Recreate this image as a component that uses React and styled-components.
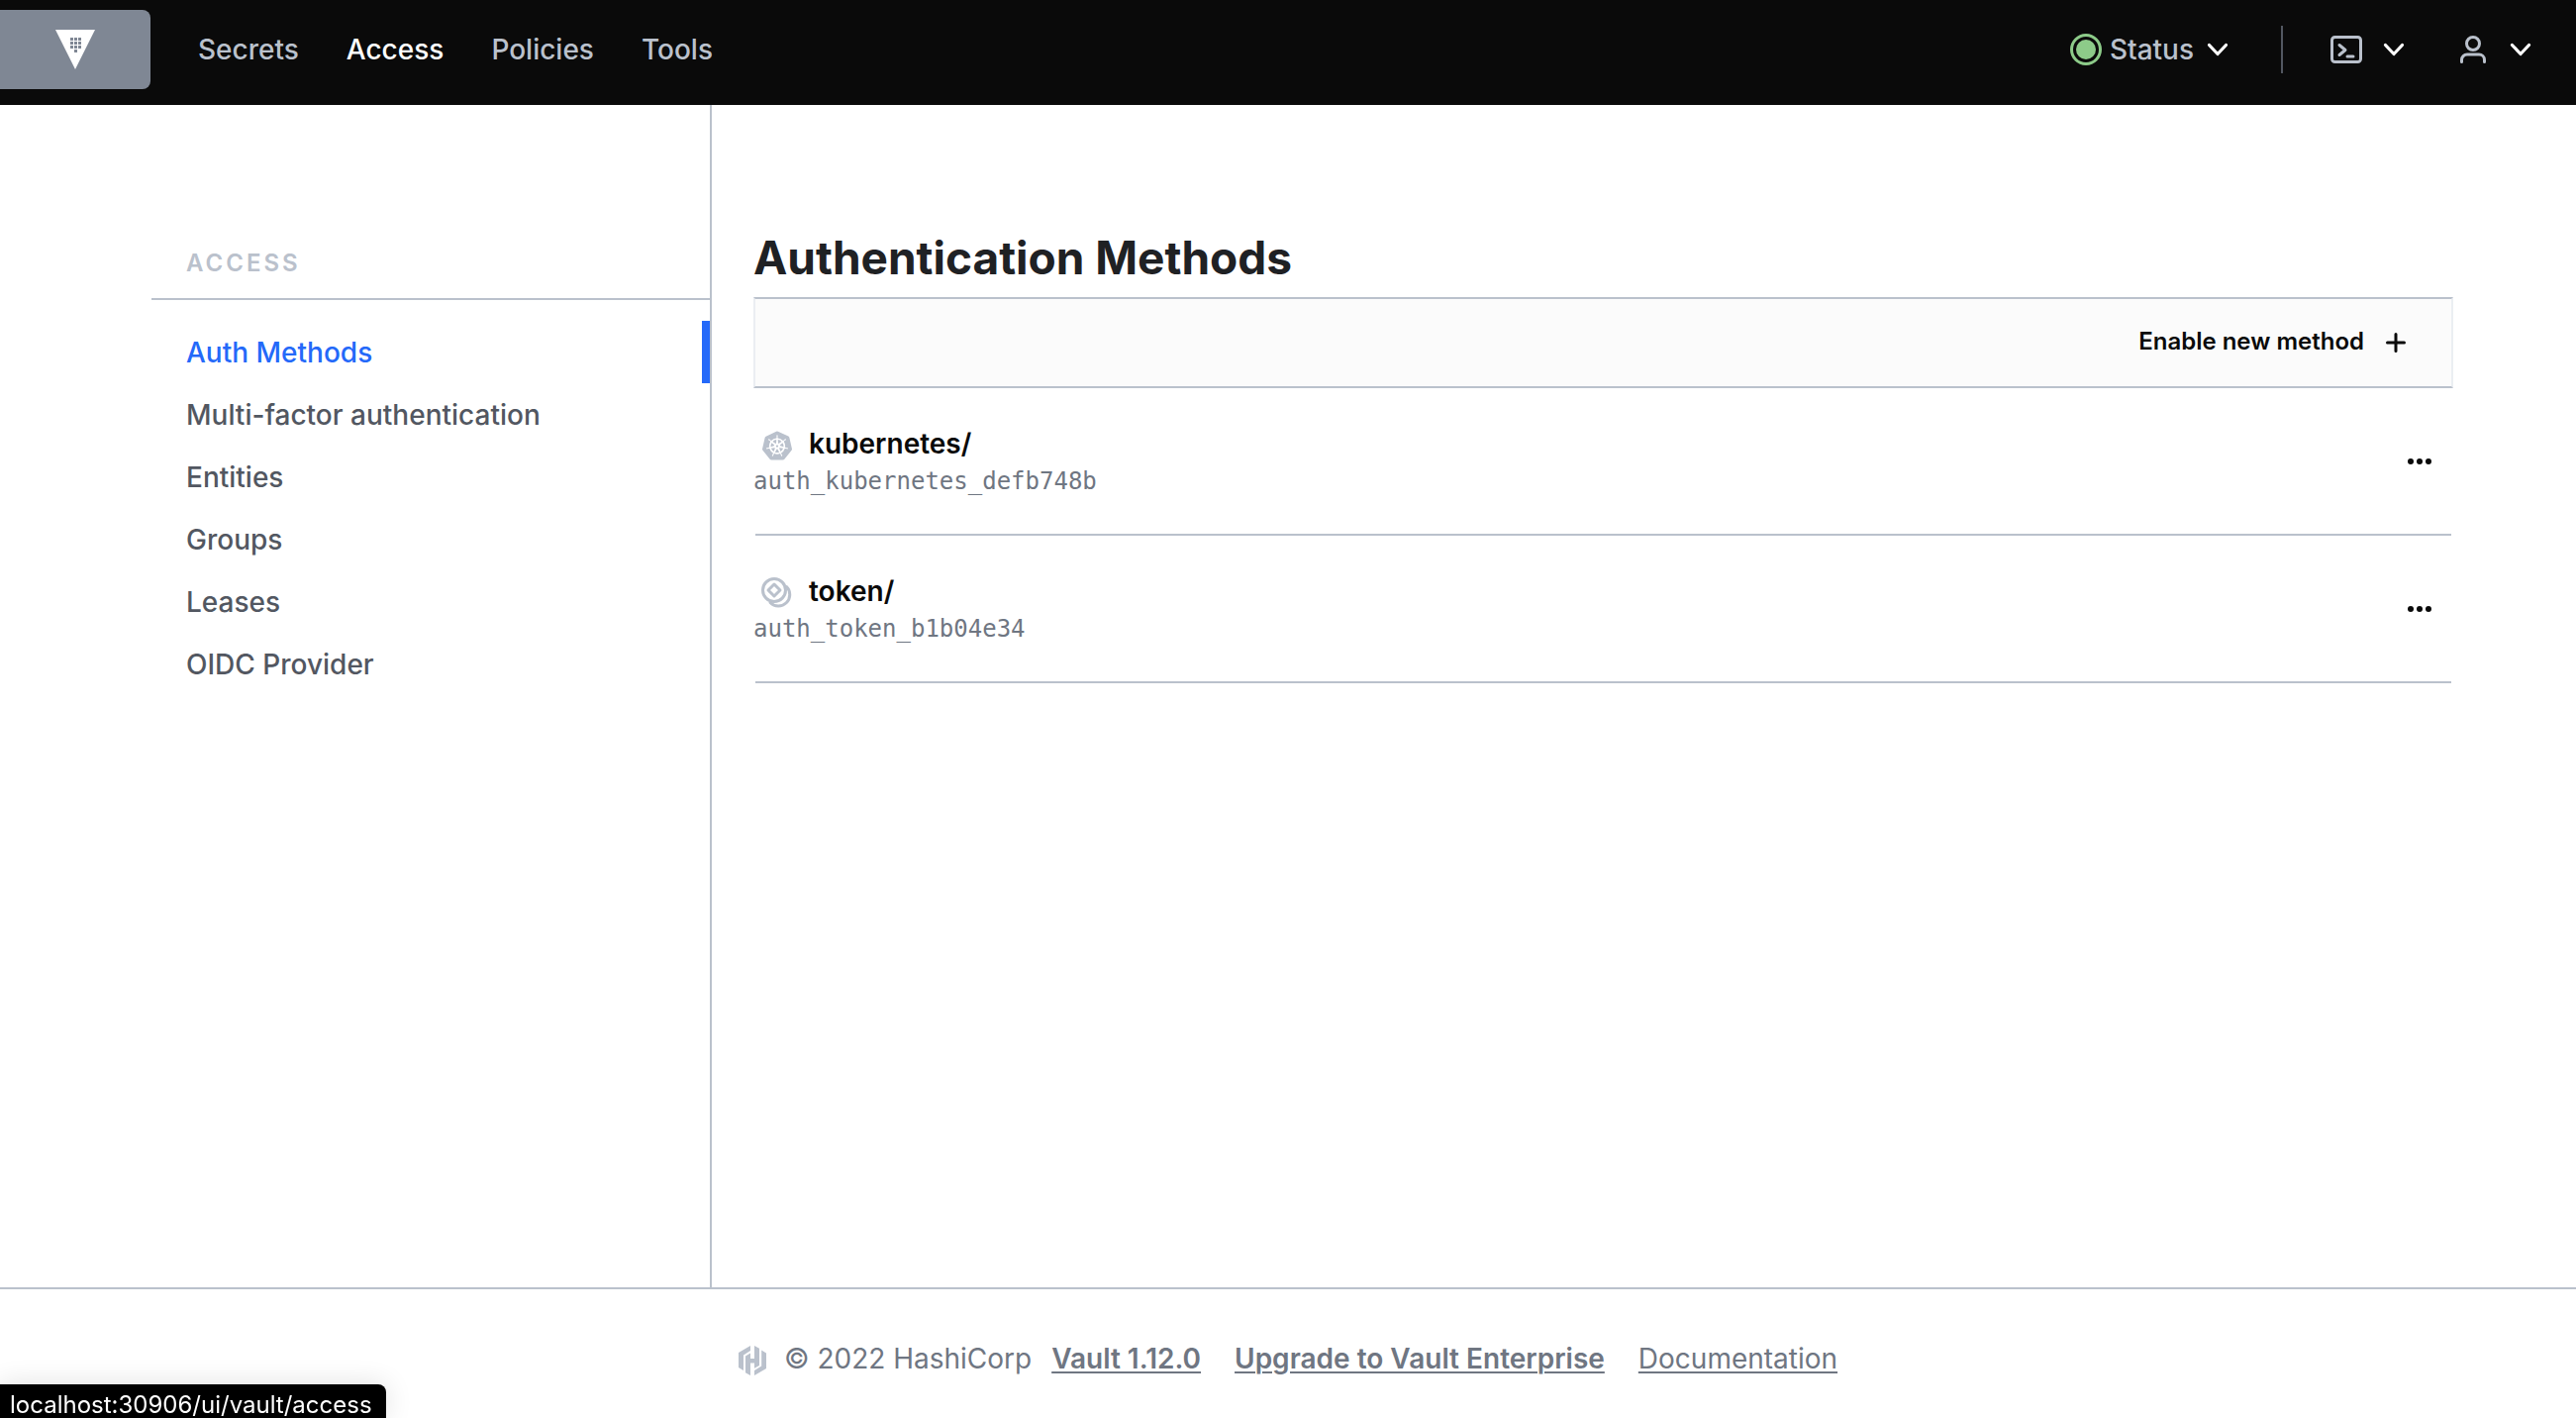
import React from 'react';
import styled, { createGlobalStyle } from 'styled-components';
import { SiKubernetes } from 'react-icons/si';

const color = {
  black: '#0a0a0a',
  ink: '#1f2124',
  body: '#525761',
  muted: '#6f7682',
  line: '#bac1cc',
  faint: '#ebeef2',
  brand: '#7f8794',
  blue: '#2469f9',
  green: '#8dcb89',
};

const GlobalStyle = createGlobalStyle`
  *, *::before, *::after { box-sizing: border-box; }
  body {
    margin: 0;
    background: #fff;
    color: ${color.black};
    font-family: Inter, "Liberation Sans", sans-serif;
    font-size: 28px;
    line-height: 36px;
    -webkit-font-smoothing: antialiased;
  }
  button { font: inherit; color: inherit; background: none; border: 0; padding: 0; cursor: pointer; }
  a { color: inherit; text-decoration: none; }
  ul { list-style: none; margin: 0; padding: 0; }
  svg { display: block; flex: none; }
`;

const Page = styled.div`
  display: flex;
  flex-direction: column;
  min-height: 100vh;
`;

const TopBar = styled.header`
  display: flex;
  align-items: center;
  height: 106px;
  padding: 0 40px 6px 0;
  background: ${color.black};
  color: ${color.line};
  font-weight: 500;
`;

const Brand = styled.a`
  display: flex;
  align-items: center;
  justify-content: center;
  width: 152px;
  height: 80px;
  border-radius: 0 8px 8px 0;
  background: ${color.brand};
`;

const MainNav = styled.nav`
  display: flex;
  gap: 48px;
  margin-left: 48px;
`;

const NavLink = styled.a`
  color: ${(p) => (p.$active ? '#fff' : color.line)};
`;

const Tools = styled.div`
  display: flex;
  align-items: center;
  margin-left: auto;
`;

const MenuButton = styled.button`
  display: flex;
  align-items: center;
  gap: ${(p) => p.$gap}px;
`;

const Divider = styled.span`
  width: 2px;
  height: 48px;
  margin: 0 48px;
  background: ${color.body};
`;

const MenuPair = styled.div`
  display: flex;
  gap: 48px;
`;

const Body = styled.div`
  display: grid;
  grid-template-columns: 719px minmax(0, 1fr);
  flex: 1;
`;

const Sidebar = styled.aside`
  padding: 142px 0 0 153px;
  border-right: 2px solid ${color.line};
`;

const SidebarTitle = styled.h2`
  margin: 0;
  padding: 0 35px 17px;
  border-bottom: 2px solid ${color.line};
  color: ${color.line};
  font-size: 24px;
  font-weight: 600;
  line-height: 36px;
  letter-spacing: 3px;
  text-transform: uppercase;
`;

const SidebarList = styled.ul`
  padding-top: 21px;
`;

const SidebarLink = styled.a`
  display: block;
  height: 63px;
  padding: 14px 35px;
  border-right: 8px solid ${(p) => (p.$active ? color.blue : 'transparent')};
  color: ${(p) => (p.$active ? color.blue : color.body)};
  font-weight: 500;
`;

const Content = styled.main`
  padding: 124px 124px 0 42px;
`;

const Title = styled.h1`
  margin: 0;
  color: ${color.ink};
  font-size: 46px;
  font-weight: 700;
  line-height: 60px;
`;

const Toolbar = styled.div`
  display: flex;
  align-items: center;
  justify-content: flex-end;
  height: 92px;
  margin-top: 10px;
  padding: 0 44px 2px 0;
  border: 2px solid ${color.faint};
  border-top-color: ${color.line};
  border-bottom-color: ${color.line};
  background: #fbfbfb;
`;

const ToolbarLink = styled.a`
  display: flex;
  align-items: center;
  gap: 20px;
  font-size: 24px;
  font-weight: 600;
`;

const MethodRow = styled.li`
  display: flex;
  align-items: center;
  justify-content: space-between;
  height: 149px;
  margin: 0 2px;
  padding-right: 20px;
  border-bottom: 2px solid ${color.line};
`;

const MethodInfo = styled.div`
  margin-left: -2px;
  padding-top: 2px;
`;

const MethodName = styled.a`
  display: flex;
  align-items: center;
  font-weight: 600;
`;

const MethodIcon = styled.span`
  display: flex;
  justify-content: center;
  width: 48px;
  margin-right: 8px;
  padding-top: 4px;
  color: ${color.line};
`;

const Accessor = styled.code`
  display: block;
  margin-top: 2px;
  color: ${color.muted};
  font-family: "DejaVu Sans Mono", monospace;
  font-size: 24px;
  line-height: 36px;
`;

const Footer = styled.footer`
  display: flex;
  justify-content: center;
  align-items: center;
  height: 132px;
  padding-top: 10px;
  border-top: 2px solid ${color.line};
  color: ${color.muted};
`;

const FooterMark = styled.span`
  margin-right: 18px;
  padding-top: 4px;
  color: ${color.line};
`;

const FooterLinks = styled.nav`
  display: flex;
  gap: 34px;
  margin-left: 20px;
`;

const FooterLink = styled.a`
  font-weight: ${(p) => (p.$strong ? 600 : 400)};
  text-decoration: underline;
  text-decoration-thickness: 2px;
  text-underline-offset: 3px;
`;

const LinkPreview = styled.div`
  position: fixed;
  left: 0;
  bottom: 0;
  height: 34px;
  padding: 3px 14px 0 10px;
  border-radius: 0 8px 0 0;
  background: #000;
  box-shadow: 0 0 28px rgba(0, 0, 0, 0.12);
  color: #fff;
  font-size: 24px;
`;

const VaultMark = () => (
  <svg width="40" height="40" viewBox="0 0 40 40" aria-hidden="true">
    <path d="M0 0h40L20 40z" fill="#fff" />
    <g fill={color.brand}>
      {[8, 12, 16].map((y) =>
        [15, 19, 23].map((x) => <rect key={`${x}-${y}`} x={x} y={y} width="3" height="3" />)
      )}
      <rect x="19" y="20" width="3" height="3" />
    </g>
  </svg>
);

const HashicorpMark = () => (
  <svg width="28" height="30" viewBox="0 0 28 30" fill="currentColor" aria-hidden="true">
    <path d="M12 0v5L5 9.500V25L0 22V7z" />
    <path d="M16 0l5 2.800V20l-5 2.800V17.500h-4V30l-5-2.800V10.500l5-3V13h4z" />
    <path d="M16 30v-5l7.200-4.500V4.500L28 7.500V23z" />
  </svg>
);

const StatusDot = () => (
  <svg width="32" height="32" viewBox="0 0 32 32" aria-hidden="true">
    <circle cx="16" cy="16" r="14.5" fill="none" stroke={color.green} strokeWidth="3" />
    <circle cx="16" cy="16" r="10" fill={color.green} />
  </svg>
);

const Chevron = () => (
  <svg width="32" height="32" viewBox="0 0 32 32" fill="none" stroke="#fff" strokeWidth="3.2" strokeLinecap="round" strokeLinejoin="round" aria-hidden="true">
    <path d="M7.5 11.5l8.500 9 8.500-9" />
  </svg>
);

const Terminal = () => (
  <svg width="32" height="32" viewBox="0 0 32 32" fill="none" stroke={color.line} strokeWidth="3" strokeLinecap="round" strokeLinejoin="round" aria-hidden="true">
    <rect x="1.500" y="3.500" width="29" height="25" rx="3" />
    <path d="M9 11.500l6 5-6 5M17 23h6" />
  </svg>
);

const User = () => (
  <svg width="32" height="32" viewBox="0 0 32 32" fill="none" stroke={color.line} strokeWidth="3" strokeLinecap="round" aria-hidden="true">
    <circle cx="16" cy="10" r="6.500" />
    <path d="M4.500 28.500v-2a5.500 5.500 0 0 1 5.500-5.500h12a5.500 5.500 0 0 1 5.500 5.500v2" />
  </svg>
);

const Plus = () => (
  <svg width="24" height="24" viewBox="0 0 24 24" stroke="currentColor" strokeWidth="3" strokeLinecap="round" aria-hidden="true">
    <path d="M12 4.500v17M3.500 13h17" />
  </svg>
);

const Dots = () => (
  <svg width="24" height="24" viewBox="0 0 24 24" fill="currentColor" aria-hidden="true">
    <circle cx="3" cy="12" r="3" />
    <circle cx="12" cy="12" r="3" />
    <circle cx="21" cy="12" r="3" />
  </svg>
);

const Coins = () => (
  <svg width="32" height="32" viewBox="0 0 32 32" fill="none" stroke="currentColor" strokeWidth="3" strokeLinejoin="round" strokeLinecap="round" aria-hidden="true">
    <circle cx="13" cy="13" r="11.500" />
    <path d="M13 7l6 6-6 6-6-6z" />
    <path d="M25.500 9.500A11.300 11.300 0 1 1 9 25.500" />
  </svg>
);

const navItems = ['Secrets', 'Access', 'Policies', 'Tools'];

const sidebarItems = [
  'Auth Methods',
  'Multi-factor authentication',
  'Entities',
  'Groups',
  'Leases',
  'OIDC Provider',
];

const methods = [
  { name: 'kubernetes/', accessor: 'auth_kubernetes_defb748b', icon: <SiKubernetes size={30} /> },
  { name: 'token/', accessor: 'auth_token_b1b04e34', icon: <Coins /> },
];

export default function App() {
  return (
    <>
      <GlobalStyle />
      <Page>
        <TopBar>
          <Brand href="#home" aria-label="Vault home">
            <VaultMark />
          </Brand>
          <MainNav>
            {navItems.map((item) => (
              <NavLink key={item} href="#nav" $active={item === 'Access'}>
                {item}
              </NavLink>
            ))}
          </MainNav>
          <Tools>
            <MenuButton $gap={8}>
              <StatusDot />
              <span>Status</span>
              <Chevron />
            </MenuButton>
            <Divider />
            <MenuPair>
              <MenuButton $gap={16} aria-label="Console">
                <Terminal />
                <Chevron />
              </MenuButton>
              <MenuButton $gap={16} aria-label="User menu">
                <User />
                <Chevron />
              </MenuButton>
            </MenuPair>
          </Tools>
        </TopBar>

        <Body>
          <Sidebar>
            <SidebarTitle>Access</SidebarTitle>
            <SidebarList>
              {sidebarItems.map((item, i) => (
                <li key={item}>
                  <SidebarLink href="#access" $active={i === 0}>
                    {item}
                  </SidebarLink>
                </li>
              ))}
            </SidebarList>
          </Sidebar>

          <Content>
            <Title>Authentication Methods</Title>
            <Toolbar>
              <ToolbarLink href="#enable">
                Enable new method
                <Plus />
              </ToolbarLink>
            </Toolbar>
            <ul>
              {methods.map((m) => (
                <MethodRow key={m.name}>
                  <MethodInfo>
                    <MethodName href="#method">
                      <MethodIcon>{m.icon}</MethodIcon>
                      {m.name}
                    </MethodName>
                    <Accessor>{m.accessor}</Accessor>
                  </MethodInfo>
                  <MenuButton aria-label={`Manage ${m.name}`}>
                    <Dots />
                  </MenuButton>
                </MethodRow>
              ))}
            </ul>
          </Content>
        </Body>

        <Footer>
          <FooterMark>
            <HashicorpMark />
          </FooterMark>
          <span>© 2022 HashiCorp</span>
          <FooterLinks>
            <FooterLink href="#version" $strong>Vault 1.12.0</FooterLink>
            <FooterLink href="#upgrade" $strong>Upgrade to Vault Enterprise</FooterLink>
            <FooterLink href="#docs">Documentation</FooterLink>
          </FooterLinks>
        </Footer>
      </Page>
      <LinkPreview>localhost:30906/ui/vault/access</LinkPreview>
    </>
  );
}
